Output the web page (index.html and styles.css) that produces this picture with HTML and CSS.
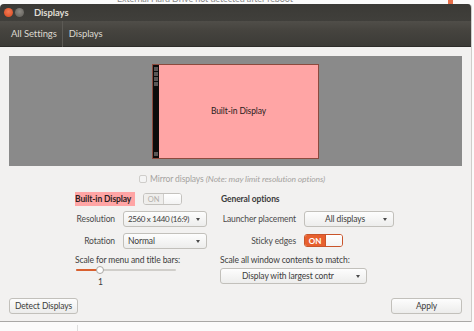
FILE: index.html
```html
<!DOCTYPE html>
<html>
<head>
<meta charset="utf-8">
<link rel="stylesheet" href="styles.css">
</head>
<body>
<div class="page">
  <div class="behind">
    <span class="behind-text">External Hard Drive not detected after reboot</span>
    <span class="behind-mark"></span>
  </div>
  <div class="window">
    <div class="titlebar">
      <span class="wbtn close"></span>
      <span class="wbtn min"></span>
      <span class="title">Displays</span>
    </div>
    <div class="toolbar">
      <span class="crumb">All Settings</span>
      <span class="crumb-sep"></span>
      <span class="crumb">Displays</span>
    </div>
    <div class="content">
      <div class="preview">
        <div class="monitor">
          <div class="launcher">
            <span class="li"></span><span class="li"></span><span class="li"></span><span class="li"></span>
            <span class="li li-bottom"></span>
          </div>
          <div class="monitor-name">Built-in Display</div>
        </div>
      </div>
      <div class="mirror">
        <span class="check"></span>
        <span class="mirror-text">Mirror displays <i>(Note: may limit resolution options)</i></span>
      </div>
      <div class="settings">
        <div class="col-left">
          <div class="row-head">
            <span class="disp-name">Built-in Display</span>
            <span class="toggle"><span class="toggle-on">ON</span><span class="toggle-off"></span></span>
          </div>
          <div class="row-field r1">
            <span class="lbl">Resolution</span>
            <span class="combo combo-res"><span class="combo-text tight">2560 x 1440 (16:9)</span><span class="arrow"></span></span>
          </div>
          <div class="row-field r2">
            <span class="lbl">Rotation</span>
            <span class="combo combo-res"><span class="combo-text">Normal</span><span class="arrow"></span></span>
          </div>
          <div class="plain r3">Scale for menu and title bars:</div>
          <div class="slider">
            <span class="track"></span>
            <span class="fill"></span>
            <span class="knob"></span>
          </div>
          <div class="slider-val">1</div>
        </div>
        <div class="col-right">
          <div class="row-head bold">General options</div>
          <div class="row-field r1">
            <span class="lbl lbl-r">Launcher placement</span>
            <span class="combo combo-launch"><span class="combo-text">All displays</span><span class="arrow"></span></span>
          </div>
          <div class="row-field r2b">
            <span class="lbl lbl-r">Sticky edges</span>
            <span class="toggle toggle-active"><span class="toggle-on">ON</span><span class="toggle-off"></span></span>
          </div>
          <div class="plain r3b">Scale all window contents to match:</div>
          <div class="combo combo-scale"><span class="combo-text">Display with largest contr</span><span class="arrow"></span></div>
        </div>
      </div>
      <div class="footer">
        <span class="btn btn-detect">Detect Displays</span>
        <span class="btn btn-apply">Apply</span>
      </div>
    </div>
  </div>
  <div class="below">
    <span class="below-line"></span>
  </div>
</div>
</body>
</html>
```

FILE: styles.css
```css
* { box-sizing: border-box; }
html, body { margin: 0; padding: 0; }
body {
  width: 474px;
  height: 331px;
  overflow: hidden;
  background: #fbfbfb;
  font-family: Lato, "Open Sans", "DejaVu Sans", sans-serif;
  font-size: 8.5px;
  letter-spacing: -0.1px;
  color: #3c3c3c;
}
.page {
  position: relative;
  width: 474px;
  height: 331px;
  overflow: hidden;
  padding-top: 4px;
}
.behind {
  position: absolute;
  left: 0; top: 0;
  width: 474px;
  height: 4px;
  overflow: hidden;
}
.behind-text {
  position: absolute;
  left: 117px;
  top: -7px;
  font-size: 9px;
  color: #888;
}
.behind-mark {
  position: absolute;
  left: 448px;
  top: 0;
  width: 5px;
  height: 4px;
  background: #e8704a;
}
.window {
  width: 472px;
  display: flex;
  flex-direction: column;
  border-right: 1px solid #cfcdca;
  border-radius: 4px 4px 0 0;
  overflow: hidden;
}
.titlebar {
  height: 17px;
  background: linear-gradient(#3b3a36, #403f3b);
  display: flex;
  align-items: center;
  padding-left: 4px;
}
.wbtn {
  width: 9px;
  height: 9px;
  border-radius: 50%;
  margin-right: 2px;
}
.close {
  background: radial-gradient(circle at 50% 40%, #f27a55, #d9471c);
}
.min {
  background: radial-gradient(circle at 50% 40%, #8d8a84, #5e5c57);
}
.title {
  margin-left: 8px;
  color: #dfdbd2;
  font-weight: bold;
  font-size: 9.5px;
}
.toolbar {
  height: 26px;
  background: linear-gradient(#504e49, #45433e 40%, #3c3b37);
  display: flex;
  align-items: center;
  padding-left: 11px;
  border-bottom: 1px solid #2e2d2a;
}
.crumb {
  color: #dcd8d0;
  font-size: 9.5px;
}
.crumb-sep {
  width: 1px;
  height: 26px;
  background: #5c5a55;
  margin: 0 6px 0 5px;
}
.content {
  background: #f2f1f0;
  height: 275px;
  padding: 9px 9px 0 9px;
  border-bottom: 1px solid #a9a8a6;
  display: flex;
  flex-direction: column;
}
.preview {
  position: relative;
  height: 110px;
  background: #8a8a8a;
  width: 453px;
}
.monitor {
  position: absolute;
  left: 143px;
  top: 8px;
  width: 167px;
  height: 95px;
  background: #ffa5a5;
  border: 1px solid #8c4a3e;
  display: flex;
}
.launcher {
  width: 6px;
  background: #0d0b0b;
  display: flex;
  flex-direction: column;
  align-items: center;
  padding-top: 2px;
}
.li {
  width: 4px;
  height: 4px;
  background: #5a5656;
  margin-bottom: 1px;
}
.li-bottom {
  margin-top: auto;
  margin-bottom: 2px;
}
.monitor-name {
  flex: 1;
  display: flex;
  align-items: center;
  justify-content: center;
  color: #2a1c1c;
  font-size: 8.5px;
  padding-bottom: 1px;
}
.mirror {
  height: 12px;
  margin-top: 7px;
  display: flex;
  align-items: center;
  padding-left: 130px;
}
.check {
  width: 8px;
  height: 8px;
  border: 1px solid #cfcdca;
  border-radius: 2px;
  background: #f4f4f4;
  margin-right: 3px;
}
.mirror-text {
  color: #a5a3a0;
}
.mirror-text i { font-style: italic; }
.settings {
  margin-top: 7px;
  display: flex;
  padding-left: 66px;
  height: 96px;
}
.col-left {
  width: 145px;
  display: flex;
  flex-direction: column;
}
.col-right {
  display: flex;
  flex-direction: column;
}
.row-head {
  height: 14px;
  display: flex;
  align-items: center;
}
.bold {
  font-weight: bold;
  color: #3c3c3c;
  padding-left: 1px;
}
.disp-name {
  background: #ffa5a5;
  font-weight: bold;
  color: #2b1f1f;
  width: 60px;
  height: 14px;
  display: flex;
  align-items: center;
  white-space: nowrap;
}
.toggle {
  margin-left: 8px;
  width: 39px;
  height: 12px;
  border: 1px solid #c4c2be;
  border-radius: 3px;
  background: #fff;
  display: flex;
  overflow: hidden;
}
.toggle-on {
  width: 20px;
  background: #efeeec;
  color: #b1afab;
  font-size: 7.5px;
  display: flex;
  align-items: center;
  justify-content: center;
  border-right: 1px solid #d0cecb;
}
.toggle-off {
  flex: 1;
  background: linear-gradient(#ffffff, #f3f3f3);
}
.toggle-active {
  margin-left: 8px;
  height: 13px;
  border-color: #c9542a;
}
.toggle-active .toggle-on {
  width: 21px;
  background: #e7602e;
  color: #fff;
  font-weight: bold;
  font-size: 8px;
  border-right: 1px solid #c9542a;
}
.row-field {
  display: flex;
  align-items: center;
  height: 16px;
}
.r1 { margin-top: 5px; }
.r2 { margin-top: 6px; }
.r2b { margin-top: 7px; height: 13px; }
.lbl {
  width: 40px;
  text-align: right;
  color: #4a4a4a;
  white-space: nowrap;
  display: flex;
  justify-content: flex-end;
}
.lbl-r {
  width: 76px;
}
.combo {
  margin-left: 8px;
  height: 16px;
  border: 1px solid #c2c0bb;
  border-radius: 3px;
  background: linear-gradient(#fdfdfd, #ededec);
  display: flex;
  align-items: center;
  position: relative;
  color: #3c3c3c;
  white-space: nowrap;
}
.tight {
  font-size: 8px;
  letter-spacing: -0.35px;
}
.combo-res {
  width: 84px;
  padding-left: 4px;
}
.combo-launch {
  width: 90px;
  padding-left: 20px;
}
.combo-scale {
  margin-left: 0;
  margin-top: 2px;
  width: 147px;
  padding-left: 21px;
}
.arrow {
  position: absolute;
  right: 6px;
  top: 6px;
  width: 0;
  height: 0;
  border-left: 2.5px solid transparent;
  border-right: 2.5px solid transparent;
  border-top: 3px solid #4a4a4a;
}
.plain {
  height: 12px;
  display: flex;
  align-items: center;
  color: #3c3c3c;
  white-space: nowrap;
}
.r3 { margin-top: 5px; }
.r3b { margin-top: 7px; }
.slider {
  position: relative;
  height: 8px;
  width: 101px;
}
.track {
  position: absolute;
  left: 1px;
  right: 0;
  top: 3px;
  height: 2px;
  background: #d0ceca;
  border-radius: 1px;
}
.fill {
  position: absolute;
  left: 1px;
  width: 24px;
  top: 3px;
  height: 2px;
  background: #d9602f;
  border-radius: 1px;
}
.knob {
  position: absolute;
  left: 21px;
  top: 0;
  width: 8px;
  height: 8px;
  border-radius: 50%;
  background: #fdfdfd;
  border: 1px solid #a9a7a3;
}
.slider-val {
  height: 12px;
  margin-top: 2px;
  padding-left: 23px;
  display: flex;
  align-items: center;
}
.footer {
  margin-top: 10px;
  display: flex;
  justify-content: space-between;
  width: 453px;
}
.btn {
  height: 16px;
  border: 1px solid #c2c0bb;
  border-radius: 3px;
  background: linear-gradient(#fdfdfd, #ececeb);
  display: flex;
  align-items: center;
  justify-content: center;
  color: #3c3c3c;
}
.btn-detect {
  width: 69px;
}
.btn-apply {
  width: 71px;
}
.below {
  position: relative;
  height: 10px;
}
.below-line {
  position: absolute;
  left: 77px;
  top: 3px;
  width: 1px;
  height: 7px;
  background: #dddddd;
}
```
